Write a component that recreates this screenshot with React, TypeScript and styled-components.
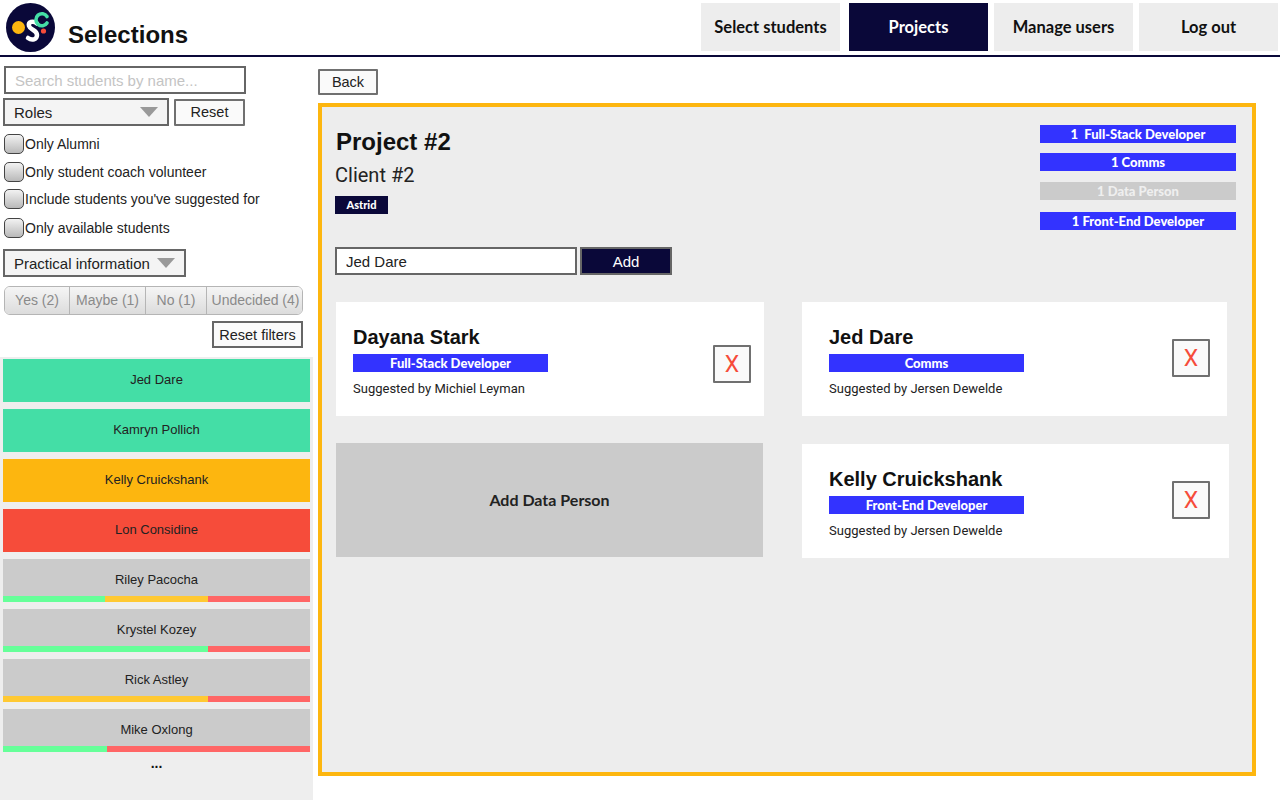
import React, { ReactElement } from 'react';
import styled, { createGlobalStyle } from 'styled-components';

const navy = '#0a0839';
const amber = '#fdb60f';

type Vote = { color: string; width: number };
type Student = { name: string; color: string; votes?: Vote[] };

const green = '#66ff99';
const yellow = '#ffc933';
const coral = '#ff6666';

const students: Student[] = [
  { name: 'Jed Dare', color: '#44dea6' },
  { name: 'Kamryn Pollich', color: '#44dea6' },
  { name: 'Kelly Cruickshank', color: '#fdb60f' },
  { name: 'Lon Considine', color: '#f64c3a' },
  {
    name: 'Riley Pacocha',
    color: '#cbcbcb',
    votes: [
      { color: green, width: 33.33 },
      { color: yellow, width: 33.33 },
      { color: coral, width: 33.34 },
    ],
  },
  {
    name: 'Krystel Kozey',
    color: '#cbcbcb',
    votes: [
      { color: green, width: 66.66 },
      { color: coral, width: 33.34 },
    ],
  },
  {
    name: 'Rick Astley',
    color: '#cbcbcb',
    votes: [
      { color: yellow, width: 66.66 },
      { color: coral, width: 33.34 },
    ],
  },
  {
    name: 'Mike Oxlong',
    color: '#cbcbcb',
    votes: [
      { color: green, width: 33.8 },
      { color: coral, width: 66.2 },
    ],
  },
];

const filters = ['Only Alumni', 'Only student coach volunteer', "Include students you've suggested for", 'Only available students'];
const statuses = [
  { label: 'Yes (2)', width: 65 },
  { label: 'Maybe (1)', width: 76 },
  { label: 'No (1)', width: 61 },
  { label: 'Undecided (4)', width: 97 },
];
const navItems = ['Select students', 'Projects', 'Manage users', 'Log out'];

function Logo(): ReactElement {
  return (
    <svg width="49" height="49" viewBox="0 0 49 49">
      <circle cx="24.5" cy="24.5" r="24.5" fill={navy} />
      <circle cx="12.5" cy="24.5" r="6.5" fill={amber} />
      <path d="M31 20.5 C27 17 22 19 23 23 C24 27 31 27 31 32 C31 36.5 26 38 22 35" fill="none" stroke="#fff" strokeWidth="4.5" strokeLinecap="round" />
      <path d="M42 14.5 A6 6 0 1 0 42 21" fill="none" stroke="#44dea6" strokeWidth="3.6" strokeLinecap="round" transform="translate(-1 -1)" />
      <circle cx="37.5" cy="28" r="2.6" fill="#f64c3a" />
    </svg>
  );
}

function App(): ReactElement {
  return (
    <Page>
      <GlobalStyle />
      <Header>
        <Brand>
          <Logo />
          <Title>Selections</Title>
        </Brand>
        <Nav>
          {navItems.map((item) => (
            <NavButton key={item} $active={item === 'Projects'}>{item}</NavButton>
          ))}
        </Nav>
      </Header>
      <Body>
        <Sidebar>
          <Filters>
            <Search placeholder="Search students by name..." />
            <RoleRow>
              <Dropdown $width={166}>Roles<Caret /></Dropdown>
              <OutlineButton $width={71} $height={27}>Reset</OutlineButton>
            </RoleRow>
            <Checks>
              {filters.map((filter) => (
                <CheckRow key={filter}>
                  <Check type="checkbox" />
                  {filter}
                </CheckRow>
              ))}
            </Checks>
            <Dropdown $width={183}>Practical information<Caret /></Dropdown>
            <StatusGroup>
              {statuses.map((status) => (
                <StatusButton key={status.label} style={{ width: status.width }}>{status.label}</StatusButton>
              ))}
            </StatusGroup>
            <ResetFilters>Reset filters</ResetFilters>
          </Filters>
          <StudentList>
            {students.map((student) => (
              <StudentCard key={student.name} $color={student.color}>
                <StudentName>{student.name}</StudentName>
                {student.votes && (
                  <VoteBar>
                    {student.votes.map((vote, i) => (
                      <VotePart key={i} $color={vote.color} style={{ width: `${vote.width}%` }} />
                    ))}
                  </VoteBar>
                )}
              </StudentCard>
            ))}
            <More>...</More>
          </StudentList>
        </Sidebar>
        <Main>
          <OutlineButton $width={60} $height={26}>Back</OutlineButton>
          <Panel>
            <PanelTop>
              <div>
                <ProjectName>Project #2</ProjectName>
                <ClientName>Client #2</ClientName>
                <CoachBadge>Astrid</CoachBadge>
              </div>
              <Needs>
                <Need $offset={0}>1&nbsp; Full-Stack Developer</Need>
                <Need $offset={10}>1 Comms</Need>
                <Need $offset={11} $muted>1 Data Person</Need>
                <Need $offset={12}>1 Front-End Developer</Need>
              </Needs>
            </PanelTop>
            <AddRow>
              <AddInput defaultValue="Jed Dare" />
              <AddButton>Add</AddButton>
            </AddRow>
            <Assignments>
              <Column $width={428}>
                <Assignment $left={17} $right={13}>
                  <div>
                    <StudentTitle>Dayana Stark</StudentTitle>
                    <RolePill>Full-Stack Developer</RolePill>
                    <Suggested>Suggested by Michiel Leyman</Suggested>
                  </div>
                  <RemoveButton $top={21}>X</RemoveButton>
                </Assignment>
                <AddSlot>Add Data Person</AddSlot>
              </Column>
              <Column $width={427}>
                <Assignment $left={27} $right={17} $narrow>
                  <div>
                    <StudentTitle>Jed Dare</StudentTitle>
                    <RolePill>Comms</RolePill>
                    <Suggested>Suggested by Jersen Dewelde</Suggested>
                  </div>
                  <RemoveButton $top={15}>X</RemoveButton>
                </Assignment>
                <Assignment $left={27} $right={19}>
                  <div>
                    <StudentTitle>Kelly Cruickshank</StudentTitle>
                    <RolePill>Front-End Developer</RolePill>
                    <Suggested>Suggested by Jersen Dewelde</Suggested>
                  </div>
                  <RemoveButton $top={15}>X</RemoveButton>
                </Assignment>
              </Column>
            </Assignments>
          </Panel>
        </Main>
      </Body>
    </Page>
  );
}

const GlobalStyle = createGlobalStyle`
  html, body {
    margin: 0;
    height: 100%;
    overflow: hidden;
    background: #fff;
  }
  * {
    box-sizing: border-box;
  }
`;

const Page = styled.div`
  width: 1280px;
  height: 800px;
  display: flex;
  flex-direction: column;
  font-family: "Liberation Sans", Arial, sans-serif;
  color: #222;
`;

const Header = styled.header`
  height: 57px;
  flex: none;
  display: flex;
  justify-content: space-between;
  border-bottom: 2px solid ${navy};
  padding: 3px 2px 0 6px;
`;

const Brand = styled.div`
  display: flex;
  gap: 13px;
`;

const Title = styled.h1`
  margin: 17px 0 0;
  font-size: 24px;
  line-height: 30px;
  font-weight: 700;
  color: #111;
`;

const Nav = styled.nav`
  display: flex;
  gap: 6px;
  height: 48px;
`;

const NavButton = styled.button<{ $active?: boolean }>`
  width: 139px;
  margin-left: ${(p) => (p.$active ? '3px' : '0')};
  border: none;
  padding: 0;
  background: ${(p) => (p.$active ? navy : '#ededed')};
  color: ${(p) => (p.$active ? '#fff' : '#111')};
  font-family: Lato, sans-serif;
  font-size: 16.5px;
  font-weight: 700;
`;

const Body = styled.div`
  flex: 1;
  display: flex;
  min-height: 0;
`;

const Sidebar = styled.aside`
  width: 313px;
  flex: none;
  display: flex;
  flex-direction: column;
`;

const Filters = styled.div`
  height: 300px;
  flex: none;
  padding: 9px 10px 0 3px;
`;

const Search = styled.input`
  display: block;
  width: 242px;
  height: 28px;
  margin-left: 1px;
  border: 2px solid #666;
  padding: 0 9px;
  font-family: inherit;
  font-size: 15px;
  &::placeholder {
    color: #c4c4c4;
    opacity: 1;
  }
`;

const RoleRow = styled.div`
  display: flex;
  align-items: center;
  gap: 5px;
  margin-top: 4px;
`;

const Dropdown = styled.div<{ $width: number }>`
  width: ${(p) => p.$width}px;
  height: 28px;
  display: flex;
  align-items: center;
  justify-content: space-between;
  border: 2px solid #666;
  padding: 0 9px;
  background: #f4f4f4;
  font-size: 15px;
`;

const Caret = styled.span`
  width: 0;
  height: 0;
  border-left: 9px solid transparent;
  border-right: 9px solid transparent;
  border-top: 10px solid #999;
`;

const OutlineButton = styled.button<{ $width: number; $height: number }>`
  width: ${(p) => p.$width}px;
  height: ${(p) => p.$height}px;
  flex: none;
  padding: 0;
  background: #fafafa;
  border: 2px solid #707070;
  border-radius: 1px;
  color: #222;
  font-family: inherit;
  font-size: 14.5px;
`;

const Checks = styled.div`
  display: flex;
  flex-direction: column;
  gap: 8px;
  margin: 8px 0 11px;
`;

const CheckRow = styled.label`
  height: 20px;
  display: flex;
  align-items: center;
  font-size: 14px;
  color: #222;
  &:nth-child(3) {
    margin: -1px 0 1px;
  }
`;

const Check = styled.input`
  appearance: none;
  width: 20px;
  height: 20px;
  flex: none;
  margin: 0 1px;
  border: 1.5px solid #444;
  border-radius: 5px;
  background: linear-gradient(#f2f2f2, #b9b9b9);
`;

const StatusGroup = styled.div`
  width: 299px;
  height: 29px;
  margin: 9px 0 0 1px;
  display: flex;
  border: 1px solid #b5b5b5;
  border-radius: 6px;
  overflow: hidden;
`;

const StatusButton = styled.button`
  flex: none;
  padding: 0 0 2px;
  border: none;
  border-right: 1px solid #b5b5b5;
  background: linear-gradient(#f5f5f5, #dcdcdc);
  color: #8a8a8a;
  font-family: inherit;
  font-size: 14px;
  white-space: nowrap;
  &:last-child {
    border-right: none;
  }
`;

const ResetFilters = styled.button`
  display: block;
  width: 91px;
  height: 27px;
  margin: 6px 0 0 209px;
  padding: 0;
  background: #fafafa;
  border: 2px solid #666;
  color: #222;
  font-family: inherit;
  font-size: 14.5px;
`;

const StudentList = styled.div`
  flex: 1;
  display: flex;
  flex-direction: column;
  gap: 7px;
  background: #eee;
  padding: 2px 3px 0;
`;

const StudentCard = styled.div<{ $color: string }>`
  position: relative;
  height: 43px;
  flex: none;
  display: flex;
  align-items: center;
  justify-content: center;
  padding-bottom: 2px;
  background: ${(p) => p.$color};
`;

const StudentName = styled.span`
  font-size: 13px;
  color: #222;
`;

const VoteBar = styled.div`
  position: absolute;
  left: 0;
  right: 0;
  bottom: 0;
  height: 6px;
  display: flex;
`;

const VotePart = styled.div<{ $color: string }>`
  background: ${(p) => p.$color};
`;

const More = styled.div`
  margin-top: -4px;
  text-align: center;
  font-size: 14px;
  font-weight: 700;
  line-height: 16px;
  color: #111;
`;

const Main = styled.main`
  flex: 1;
  padding: 12px 24px 0 5px;
`;

const Panel = styled.section`
  width: 938px;
  height: 673px;
  margin-top: 8px;
  border: 4px solid ${amber};
  background: #ededed;
  padding: 18px 16px 0 13px;
`;

const PanelTop = styled.div`
  height: 122px;
  display: flex;
  justify-content: space-between;
`;

const ProjectName = styled.h2`
  margin: 2px 0 0 1px;
  font-family: "Liberation Sans", Arial, sans-serif;
  font-size: 24px;
  line-height: 30px;
  font-weight: 700;
  color: #111;
`;

const ClientName = styled.div`
  margin-top: 5px;
  font-family: Roboto, sans-serif;
  font-size: 20px;
  line-height: 26px;
  color: #222;
`;

const CoachBadge = styled.div`
  width: 53px;
  height: 18px;
  margin-top: 8px;
  background: ${navy};
  color: #fff;
  font-family: Lato, sans-serif;
  font-size: 11px;
  font-weight: 900;
  line-height: 18px;
  text-align: center;
`;

const Needs = styled.div`
  width: 196px;
`;

const Need = styled.div<{ $offset: number; $muted?: boolean }>`
  height: 18px;
  margin-top: ${(p) => p.$offset}px;
  background: ${(p) => (p.$muted ? '#cbcbcb' : '#3333ff')};
  color: ${(p) => (p.$muted ? '#efefef' : '#fff')};
  font-family: Lato, sans-serif;
  font-size: 13px;
  font-weight: 900;
  line-height: 18px;
  text-align: center;
`;

const AddRow = styled.div`
  display: flex;
  gap: 3px;
`;

const AddInput = styled.input`
  width: 242px;
  height: 28px;
  border: 2px solid #666;
  padding: 0 9px;
  background: #fff;
  color: #222;
  font-family: inherit;
  font-size: 15px;
`;

const AddButton = styled.button`
  width: 92px;
  height: 28px;
  padding: 0;
  border: 2px solid #666;
  background: ${navy};
  color: #fff;
  font-family: inherit;
  font-size: 15px;
`;

const Assignments = styled.div`
  display: flex;
  gap: 38px;
  margin: 27px 0 0 1px;
`;

const Column = styled.div<{ $width: number }>`
  width: ${(p) => p.$width}px;
  display: flex;
  flex-direction: column;
  gap: 28px;
`;

const Assignment = styled.article<{ $left: number; $right: number; $narrow?: boolean }>`
  width: ${(p) => (p.$narrow ? '425px' : '100%')};
  height: 114px;
  display: flex;
  align-items: flex-start;
  justify-content: space-between;
  background: #fff;
  padding: 22px ${(p) => p.$right}px 0 ${(p) => p.$left}px;
`;

const StudentTitle = styled.h3`
  margin: 0;
  font-family: "Liberation Sans", Arial, sans-serif;
  font-size: 20px;
  line-height: 26px;
  font-weight: 700;
  color: #111;
`;

const RolePill = styled.div`
  width: 195px;
  height: 18px;
  margin-top: 4px;
  background: #3333ff;
  color: #fff;
  font-family: Lato, sans-serif;
  font-size: 13px;
  font-weight: 900;
  line-height: 18px;
  text-align: center;
`;

const Suggested = styled.div`
  margin-top: 9px;
  font-family: Roboto, sans-serif;
  font-size: 13px;
  line-height: 16px;
  color: #222;
`;

const RemoveButton = styled.button<{ $top: number }>`
  width: 38px;
  height: 38px;
  flex: none;
  margin-top: ${(p) => p.$top}px;
  padding: 0;
  background: #fafafa;
  border: 2px solid #707070;
  border-radius: 1px;
  color: #f64c3a;
  font-family: Roboto, sans-serif;
  font-size: 23px;
  font-weight: 400;
`;

const AddSlot = styled.div`
  width: 427px;
  height: 114px;
  margin-top: -1px;
  display: flex;
  align-items: center;
  justify-content: center;
  padding-bottom: 2px;
  background: #cbcbcb;
  color: #222;
  font-family: Lato, sans-serif;
  font-size: 16px;
  font-weight: 700;
`;

export default App;
